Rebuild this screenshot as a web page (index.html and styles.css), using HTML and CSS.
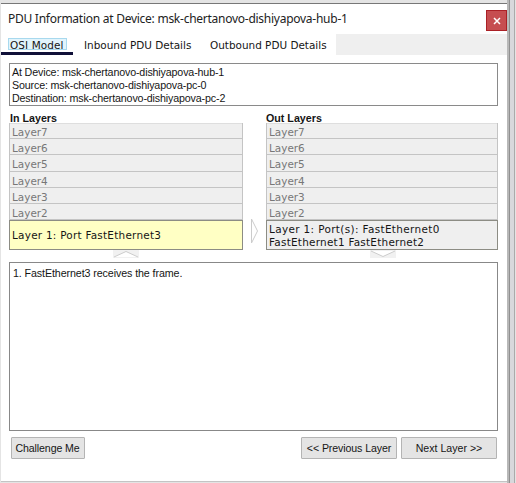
FILE: index.html
```html
<!DOCTYPE html>
<html lang="en">
<head>
<meta charset="utf-8">
<title>PDU Information</title>
<link rel="stylesheet" href="styles.css">
</head>
<body>
<main class="dialog">
  <header class="titlebar">
    <h1>PDU Information at Device: msk-chertanovo-dishiyapova-hub-1</h1>
    <button class="close" aria-label="Close"><svg width="8" height="8" viewBox="0 0 8 8"><path d="M1 1l6 6M7 1L1 7"/></svg></button>
  </header>
  <nav class="tabs">
    <div class="tab active"><span>OSI Model</span></div>
    <div class="tab inbound">Inbound PDU Details</div>
    <div class="tab outbound">Outbound PDU Details</div>
  </nav>
  <section class="info">
    <div>At Device: msk-chertanovo-dishiyapova-hub-1</div>
    <div>Source: msk-chertanovo-dishiyapova-pc-0</div>
    <div>Destination: msk-chertanovo-dishiyapova-pc-2</div>
  </section>
  <section class="stacks">
    <div class="stack in">
      <h2>In Layers</h2>
      <div class="layer">Layer7</div><div class="layer">Layer6</div><div class="layer">Layer5</div><div class="layer">Layer4</div><div class="layer">Layer3</div><div class="layer">Layer2</div>
      <div class="layer one current"><span>Layer 1: Port FastEthernet3</span></div>
      <svg class="arrow" width="26" height="8" viewBox="0 0 26 8"><path d="M1 7L13 1.500L25 7"/></svg>
    </div>
    <svg class="next" width="9" height="28" viewBox="0 0 9 28"><path d="M1.500 2L7.500 14L1.500 26Z"/></svg>
    <div class="stack out">
      <h2>Out Layers</h2>
      <div class="layer">Layer7</div><div class="layer">Layer6</div><div class="layer">Layer5</div><div class="layer">Layer4</div><div class="layer">Layer3</div><div class="layer">Layer2</div>
      <div class="layer one"><span><span class="wide">Layer 1: Port(s): FastEthernet0</span><br>FastEthernet1 FastEthernet2</span></div>
      <svg class="arrow" width="26" height="8" viewBox="0 0 26 8"><path d="M1 1L13 6.500L25 1"/></svg>
    </div>
  </section>
  <section class="notes">1. FastEthernet3 receives the frame.</section>
  <footer>
    <button class="btn challenge">Challenge Me</button>
    <button class="btn prev">&lt;&lt; Previous Layer</button>
    <button class="btn following">Next Layer &gt;&gt;</button>
  </footer>
</main>
<aside class="edge"></aside>
</body>
</html>
```
FILE: styles.css
```css
* { box-sizing: border-box; }
body {
  margin: 0;
  width: 516px;
  height: 483px;
  display: flex;
  overflow: hidden;
  background: #e4e4e4;
  font-family: "Liberation Sans", Arial, sans-serif;
  font-size: 10.7px;
  color: #151515;
}
h1, h2 { margin: 0; }
.dialog {
  width: 506px;
  height: 478px;
  margin: 3px 0 0 1px;
  background: #fff;
  border-top: 1px solid #777;
  box-shadow: 0 1px 0 #c4c4c4;
  flex: none;
}
.titlebar { display: flex; height: 30px; justify-content: space-between; padding-left: 7px; }
h1 {
  font: 400 12px/30px "Noto Sans", sans-serif;
  letter-spacing: -.26px;
  color: #222;
  white-space: nowrap;
}
.close {
  width: 21px;
  height: 21px;
  margin-top: 6px;
  padding: 0;
  display: grid;
  place-items: center;
  background: #c64d50;
  border: 1px solid #aa2026;
}
.close path { stroke: #fff; stroke-width: 1.5; fill: none; }
.tabs {
  display: flex;
  height: 21px;
  background: #efefef;
  font: 10.45px/15px "DejaVu Sans", sans-serif;
  white-space: nowrap;
}
.tab { background: #fff; padding-top: 4px; }
.active { width: 72px; padding: 4px 0 0 7px; border-bottom: 3px solid #101038; }
.active span { display: block; width: 59px; height: 12px; line-height: 12px; padding-left: 1px; background: #e2f4fc; border: 1px solid #a8d9ee; letter-spacing: .1px; }
.inbound { width: 126px; padding-left: 11px; }
.outbound { width: 137px; padding-left: 11px; }
.info {
  width: 489px;
  height: 43px;
  margin: 8px 0 0 8px;
  padding: 2px;
  border: 1px solid #8a8a8a;
  line-height: 13px;
  letter-spacing: -.15px;
  white-space: nowrap;
}
.stacks { display: flex; margin-left: 8px; height: 154px; }
.stack { width: 234px; }
.out { width: 232px; }
h2 { font: 700 10.7px/12px "Liberation Sans", sans-serif; padding: 6px 0 0 1px; height: 17px; }
.out h2 { padding-left: 0; }
.layer {
  height: 16.2px;
  padding-left: 2px;
  border: 1px solid #c4c4c4;
  border-top-width: 0;
  background: #efefef;
  color: #777;
  font: 10.45px/18px "DejaVu Sans", sans-serif;
}
.stack h2 + .layer { box-shadow: inset 0 1px #dedede; }
.one {
  height: 30px;
  border: 1px solid #8c8c84;
  color: #151515;
  line-height: 13px;
  letter-spacing: .25px;
  display: flex;
  align-items: center;
  white-space: nowrap;
}
.one > span { padding-top: 1px; }
.wide { letter-spacing: .36px; }
.current { background: #ffffc4; }
.arrow { display: block; margin-left: 104px; background: #f1f1f1; }
.arrow path, .next path { fill: #fff; stroke: #ccc; stroke-width: 1; }
.next { margin: 111px 7px 0 7px; flex: none; }
.notes {
  width: 489px;
  height: 169px;
  margin: 2px 0 0 8px;
  padding: 4px 3px;
  border: 1px solid #888;
  line-height: 13px;
  letter-spacing: -.1px;
}
footer { display: flex; margin: 6px 0 0 9.5px; }
.btn {
  height: 22px;
  padding: 0;
  border: 1px solid #b4b4b4;
  border-radius: 1px;
  background: #e4e4e4;
  font: 10.6px "Liberation Sans", sans-serif;
  color: #151515;
  white-space: nowrap;
}
.challenge { width: 74px; margin-right: 216.5px; letter-spacing: -.1px; }
.prev { width: 96px; margin-right: 4px; letter-spacing: -.1px; }
.following { width: 96px; }
.edge { width: 9px; background: linear-gradient(90deg, #b8b8b8 0 2px, #909090 2px 3px, #d8d8dc 3px 7px, #aaa 7px 8px, #e4e4e4 8px); }
```
